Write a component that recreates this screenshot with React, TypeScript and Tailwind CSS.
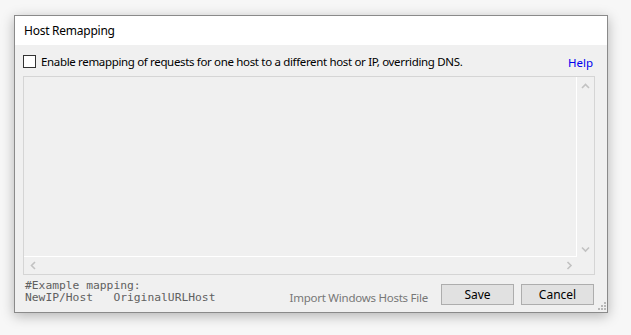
import React from "react";

const ui = { fontFamily: '"Noto Sans", "Open Sans", sans-serif' };
const mono = { fontFamily: '"DejaVu Sans Mono", "Liberation Mono", monospace' };

function Chevron({ dir }: { dir: "up" | "down" | "left" | "right" }) {
  const pts: Record<string, string> = {
    up: "1,5 4.5,1.5 8,5",
    down: "1,1.5 4.5,5 8,1.5",
    left: "5,1 1.5,4.5 5,8",
    right: "1.5,1 5,4.5 1.5,8",
  };
  const horiz = dir === "up" || dir === "down";
  return (
    <svg width={horiz ? 9 : 7} height={horiz ? 7 : 9} viewBox={horiz ? "0 0 9 7" : "0 0 7 9"}>
      <polyline points={pts[dir]} fill="none" stroke="#c2c2c2" strokeWidth="1.6" />
    </svg>
  );
}

function Grip() {
  const dots = [
    [6, 0],
    [3, 3],
    [6, 3],
    [0, 6],
    [3, 6],
    [6, 6],
  ];
  return (
    <svg width="8" height="8" viewBox="0 0 8 8">
      {dots.map(([x, y], i) => (
        <rect key={i} x={x} y={y} width="2" height="2" fill="#b8b8b8" />
      ))}
    </svg>
  );
}

export default function App() {
  return (
    <div className="w-[631px] h-[335px] bg-[#f7f7f7] pt-[15px] pl-[14px]" style={ui}>
      <div className="w-[594px] h-[298px] border border-[#8a8a8a] bg-[#f0f0f0] shadow-[0_3px_12px_rgba(0,0,0,0.28)] flex flex-col relative">
        <div className="h-[29px] bg-white flex items-center pl-[9px] text-[12px] tracking-[-0.25px] text-black">
          Host Remapping
        </div>
        <div className="flex-1 flex flex-col pl-[8px] pr-[12px] pt-[9px]">
          <div className="h-[15px] flex items-center">
            <div className="w-[13px] h-[13px] border border-[#333] bg-white" />
            <span className="ml-[5px] text-[11.5px] text-black tracking-[-0.34px]">
              Enable remapping of requests for one host to a different host or IP, overriding DNS.
            </span>
            <span className="ml-auto mr-[2px] mt-[3px] text-[11.5px] text-[#0000ee]">Help</span>
          </div>
          <div className="mt-[7px] h-[199px] border border-[#d5d5d5] grid grid-cols-[1fr_17px] grid-rows-[1fr_17px]">
            <div className="border-r border-b border-white" />
            <div className="flex flex-col items-center justify-between pt-[6px] pb-[4px]">
              <Chevron dir="up" />
              <Chevron dir="down" />
            </div>
            <div className="flex items-center justify-between pl-[6px] pr-[4px]">
              <Chevron dir="left" />
              <Chevron dir="right" />
            </div>
            <div />
          </div>
          <div className="flex items-start mt-[5px] pr-[1px]">
            <div className="text-[11.3px] leading-[12px] text-[#606060] pl-[2px] whitespace-pre" style={mono}>
              {"#Example mapping:\nNewIP/Host   OriginalURLHost"}
            </div>
            <div className="ml-auto mt-[9px] text-[11.5px] text-[#777] tracking-[-0.25px]">Import Windows Hosts File</div>
            <button className="ml-[13px] mt-[4px] w-[73px] h-[21px] border border-[#adadad] bg-[#e1e1e1] text-[12px] text-black" style={ui}>
              Save
            </button>
            <button className="ml-[7px] mt-[4px] w-[73px] h-[21px] border border-[#adadad] bg-[#e1e1e1] text-[12px] text-black" style={ui}>
              Cancel
            </button>
          </div>
        </div>
        <div className="absolute right-[1px] bottom-[2px]">
          <Grip />
        </div>
      </div>
    </div>
  );
}
